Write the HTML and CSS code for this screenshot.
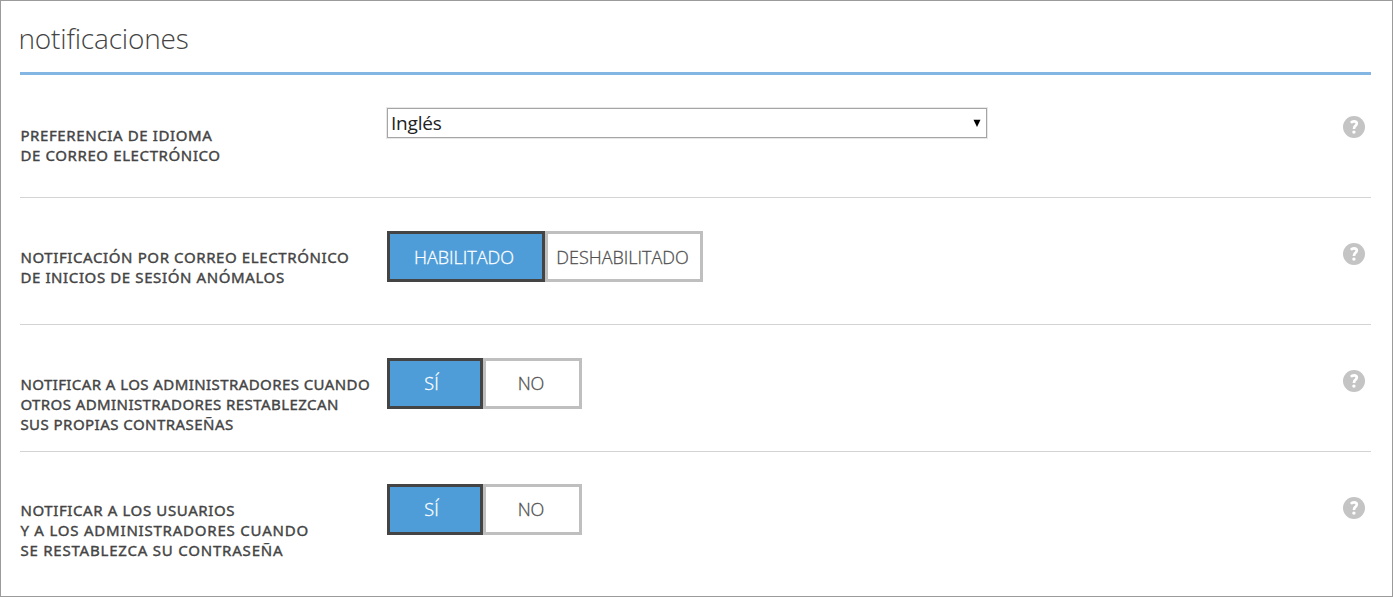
FILE: index.html
```html
<!DOCTYPE html>
<html lang="es">
<head>
<meta charset="utf-8">
<title>notificaciones</title>
<link rel="stylesheet" href="styles.css">
</head>
<body>
<main class="panel">
  <h1 class="title"><span>notificaciones</span></h1>
  <section class="row row-language">
    <div class="label"><div class="l1">PREFERENCIA DE IDIOMA</div><div class="l2">DE CORREO ELECTRÓNICO</div></div>
    <div class="control"><div class="select" role="combobox"><span>Inglés</span><svg width="8" height="8" viewBox="0 0 8 8"><path d="M.5.8h7L4 8z"/></svg></div></div>
    <svg class="help" viewBox="0 0 22 22"><circle cx="11" cy="11" r="11"/><path d="M7.9 6.8Q9.1 5.4 11 5.4Q13.8 5.4 13.8 7.6Q13.8 8.9 12.4 9.9Q11 10.9 11 12.9"/><circle class="dot" cx="10.9" cy="16.1" r="1.7"/></svg>
  </section>
  <section class="row row-signin">
    <div class="label"><div class="l3">NOTIFICACIÓN POR CORREO ELECTRÓNICO</div><div class="l4">DE INICIOS DE SESIÓN ANÓMALOS</div></div>
    <div class="control toggle wide"><button class="on"><span>HABILITADO</span></button><button><span>DESHABILITADO</span></button></div>
    <svg class="help" viewBox="0 0 22 22"><circle cx="11" cy="11" r="11"/><path d="M7.9 6.8Q9.1 5.4 11 5.4Q13.8 5.4 13.8 7.6Q13.8 8.9 12.4 9.9Q11 10.9 11 12.9"/><circle class="dot" cx="10.9" cy="16.1" r="1.7"/></svg>
  </section>
  <section class="row row-admins">
    <div class="label"><div class="l5">NOTIFICAR A LOS ADMINISTRADORES CUANDO</div><div class="l6">OTROS ADMINISTRADORES RESTABLEZCAN</div><div class="l7">SUS PROPIAS CONTRASEÑAS</div></div>
    <div class="control toggle"><button class="on"><span>SÍ</span></button><button><span>NO</span></button></div>
    <svg class="help" viewBox="0 0 22 22"><circle cx="11" cy="11" r="11"/><path d="M7.9 6.8Q9.1 5.4 11 5.4Q13.8 5.4 13.8 7.6Q13.8 8.9 12.4 9.9Q11 10.9 11 12.9"/><circle class="dot" cx="10.9" cy="16.1" r="1.7"/></svg>
  </section>
  <section class="row row-users">
    <div class="label"><div class="l8">NOTIFICAR A LOS USUARIOS</div><div class="l9">Y A LOS ADMINISTRADORES CUANDO</div><div class="l10">SE RESTABLEZCA SU CONTRASEÑA</div></div>
    <div class="control toggle"><button class="on"><span>SÍ</span></button><button><span>NO</span></button></div>
    <svg class="help" viewBox="0 0 22 22"><circle cx="11" cy="11" r="11"/><path d="M7.9 6.8Q9.1 5.4 11 5.4Q13.8 5.4 13.8 7.6Q13.8 8.9 12.4 9.9Q11 10.9 11 12.9"/><circle class="dot" cx="10.9" cy="16.1" r="1.7"/></svg>
  </section>
</main>
</body>
</html>
```

FILE: styles.css
```css
* { box-sizing: border-box; }
body { margin: 0; background: #fff; font-family: "Open Sans", sans-serif; }
.panel { height: 597px; border: 1px solid #9b9b9b; padding: 0 21px 0 19px; overflow: hidden; }
.title { margin: 0; height: 74px; padding-top: 18px; border-bottom: 3px solid #83b6e2; font-size: 28px; line-height: 38px; font-weight: 300; color: #444; white-space: nowrap; letter-spacing: -0.17px; text-indent: -1.5px; }
.row { display: grid; grid-template-columns: 367px 1fr 22px; align-items: start; height: 127px; padding-right: 6px; border-bottom: 1px solid #d4d4d4; }
.row-language { height: 123px; }
.row-users { border-bottom: 0; }
.label { padding: 49px 0 0 0.4px; font: 400 15px/20px "Noto Sans", sans-serif; color: #444; white-space: nowrap; -webkit-text-stroke: 0.4px #444; letter-spacing: 0.61px; }
.l5, .l6 { letter-spacing: 0.42px; }
.l7 { letter-spacing: 0.46px; }
.l9, .l10 { letter-spacing: 0.79px; }
.row-language .label { padding-top: 50px; }
.row-users .label { padding-top: 48px; }
.control { margin-top: 33px; }
.row-users .control { margin-top: 32px; }
.select { display: flex; align-items: center; justify-content: space-between; width: 600px; height: 30px; padding: 0 5px 0 3px; border: 1px solid #a5a5a5; outline: 1px solid #e8e8e8; font-size: 19px; letter-spacing: -0.2px; line-height: 28px; color: #222; }
.toggle { display: flex; }
.toggle button { width: 99px; height: 51px; padding: 0 3px 1px 0; border: 3px solid #bfbfbf; background: #fff; color: #505050; font: 300 18px/24px "Open Sans", sans-serif; white-space: nowrap; -webkit-text-stroke: 0.3px; }
.toggle .on { width: 96px; padding-right: 7px; border-color: #444; background: #4f9dd8; color: #fff; }
.toggle.wide button { width: 158px; padding: 1px 3px 0 0; }
.toggle.wide .on { padding-right: 4px; }
.help { width: 22px; height: 22px; margin-top: 45px; fill: #c4c4c4; }
.row-language .help { margin-top: 40.5px; }
.help path { fill: none; stroke: #fff; stroke-width: 2.7; }
.help .dot { fill: #fff; }
```
